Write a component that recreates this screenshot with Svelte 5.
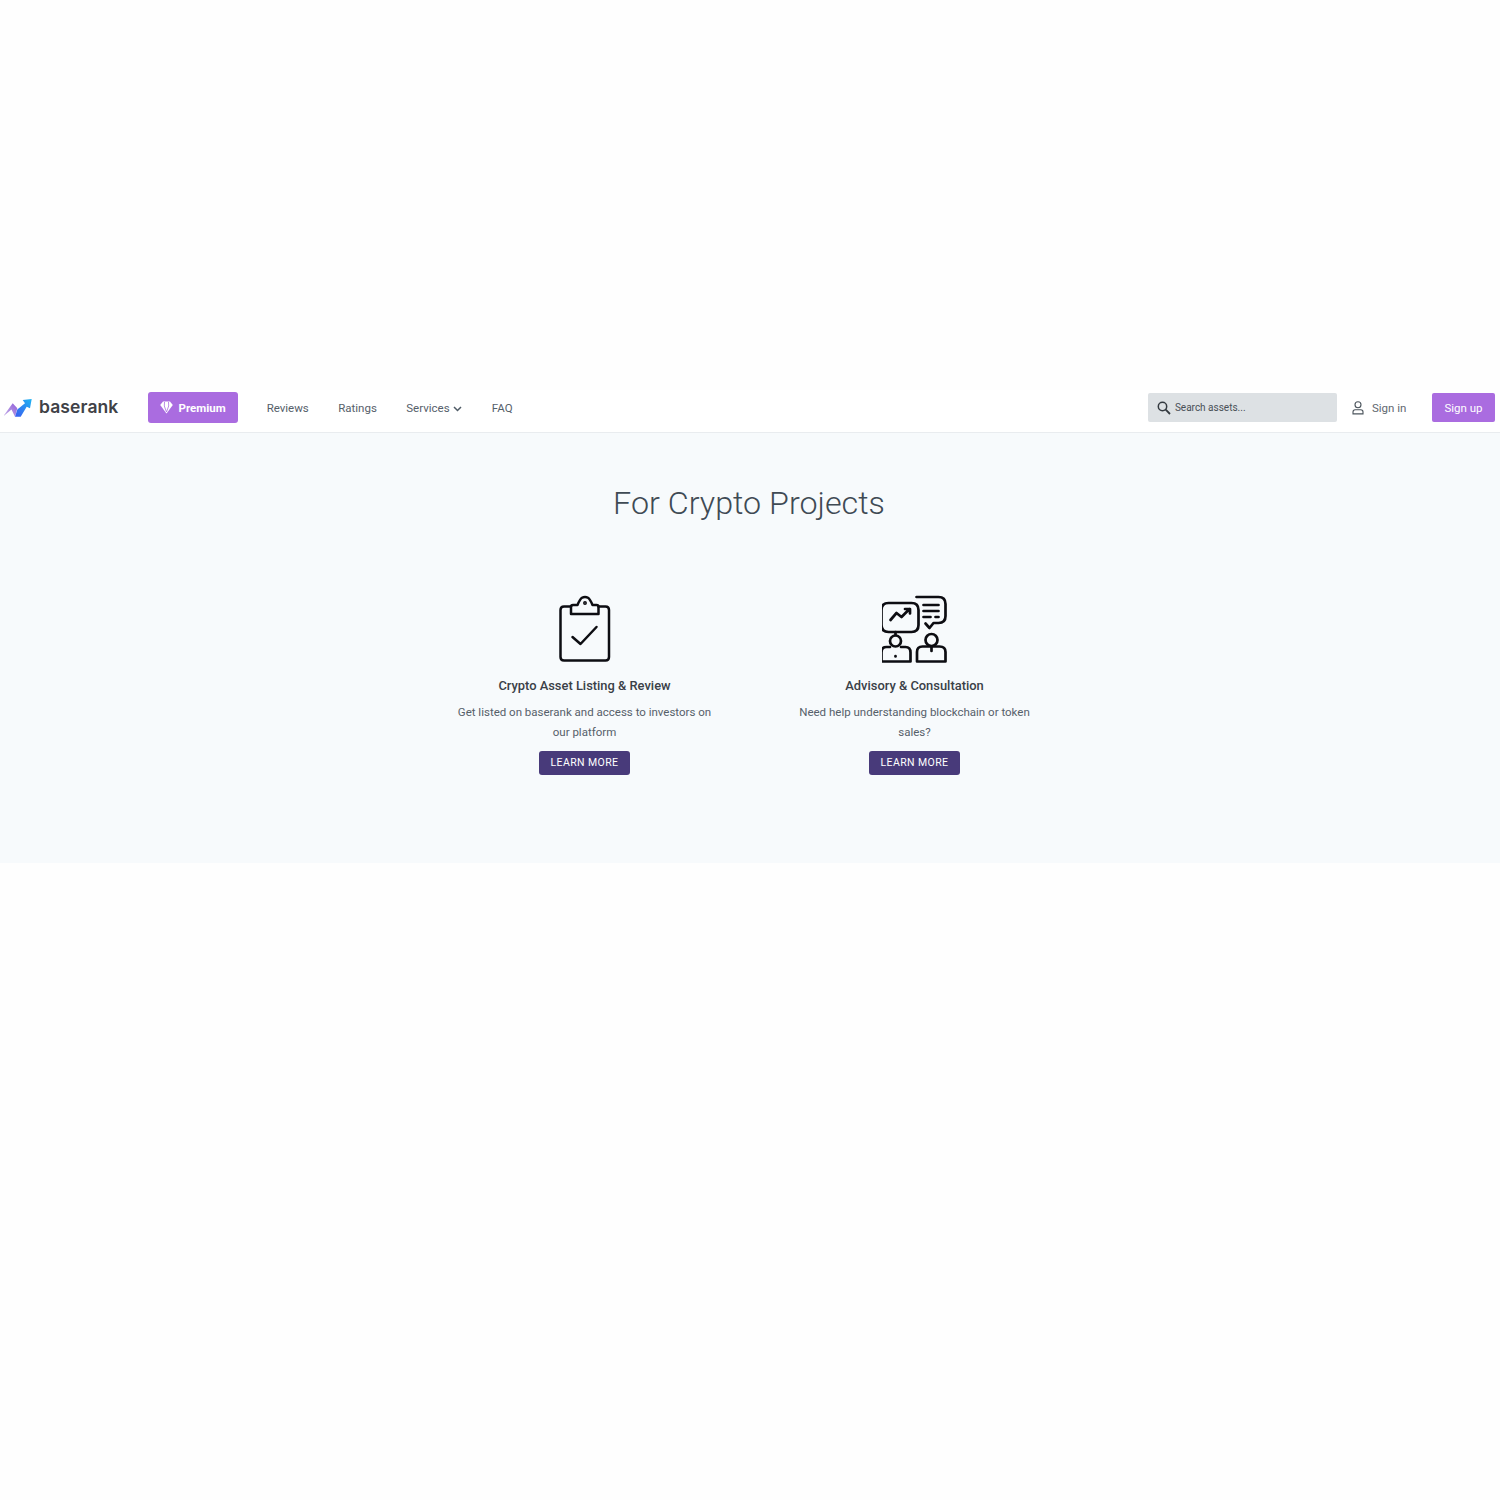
<script>
  const links = ["Reviews", "Ratings"];
  const cards = [
    { title: "Crypto Asset Listing & Review", text: "Get listed on baserank and access to investors on our platform", icon: "clipboard" },
    { title: "Advisory & Consultation", text: "Need help understanding blockchain or token sales?", icon: "advisory" }
  ];
</script>

<div class="page">
  <header>
    <a class="logo" href="#top">
      <svg width="28" height="20" viewBox="0 0 28 20">
        <defs>
          <linearGradient id="blue" x1="0" y1="1" x2="1" y2="0">
            <stop offset="0" stop-color="#3a5cf0" />
            <stop offset="1" stop-color="#1fb4f2" />
          </linearGradient>
          <linearGradient id="purple" x1="0" y1="1" x2="1" y2="0">
            <stop offset="0" stop-color="#c9b4ea" />
            <stop offset="1" stop-color="#8f5fd8" />
          </linearGradient>
        </defs>
        <path d="M-1 18.700 L8.700 5.300 L13.300 10.300 L11 18.700 L7.500 11.500 Z" fill="url(#purple)" />
        <path d="M11 18.700 H16.700 L22.700 8.700 L26 10.300 L27.700 1 L18.700 2 L21 5.300 L13.300 11.500 Z" fill="url(#blue)" />
      </svg>
      <span>baserank</span>
    </a>
    <a class="premium" href="#top">
      <svg width="13" height="13" viewBox="0 0 13 13">
        <path d="M3 0.500 H10 L12.800 4 L6.500 12.500 L0.200 4 Z" fill="#fff" />
        <path d="M4.500 1 L4.300 5 L6.500 11 M8.500 1 L8.700 5 L6.500 11" stroke="#aa6ce0" stroke-width="0.800" fill="none" />
      </svg>
      Premium
    </a>
    <nav>
      {#each links as link}
        <a href="#top">{link}</a>
      {/each}
      <a class="services" href="#top">
        Services
        <svg width="9" height="6" viewBox="0 0 9 6"><path d="M1 1 L4.500 4.500 L8 1" fill="none" stroke="#4f5b66" stroke-width="1.500" /></svg>
      </a>
      <a href="#top">FAQ</a>
    </nav>
    <div class="right">
      <div class="search">
        <svg width="14" height="14" viewBox="0 0 14 14"><circle cx="5.500" cy="5.500" r="4.200" fill="none" stroke="#343a40" stroke-width="1.500" /><path d="M8.700 8.700 L13 13" stroke="#343a40" stroke-width="1.800" /></svg>
        <span>Search assets...</span>
      </div>
      <a class="signin" href="#top">
        <svg width="12" height="14" viewBox="0 0 12 14" fill="none" stroke="#4b545c" stroke-width="1.100">
          <circle cx="6" cy="3.800" r="3" />
          <path d="M1 12.900 V11 Q1 8.800 3.200 8.800 H8.800 Q11 8.800 11 11 V12.900 Z" />
        </svg>
        Sign in
      </a>
      <a class="signup" href="#top">Sign up</a>
    </div>
  </header>

  <main>
    <h1>For Crypto Projects</h1>
    <div class="cards">
      {#each cards as card}
        <section class="card">
          {#if card.icon === "clipboard"}
            <svg class="icon" width="66" height="68" viewBox="0 0 66 68" fill="none" stroke="#0d0d12" stroke-width="2.500" stroke-linejoin="round" stroke-linecap="round">
              <path d="M19 11.500 H12 Q8.500 11.500 8.500 15 V62 Q8.500 65.500 12 65.500 H53.500 Q57 65.500 57 62 V15 Q57 11.500 53.500 11.500 H46.500" />
              <path d="M19 19 V12 Q19 10 21 10 H25.500 Q28 4 30 2.800 Q33 1 36 2.800 Q38 4 40.500 10 H44.500 Q46.500 10 46.500 12 V19 Z" />
              <circle cx="33" cy="8" r="0.700" fill="#0d0d12" />
              <path d="M20.500 42 L28.500 49 L44.500 32" />
            </svg>
          {:else}
            <svg class="icon" width="66" height="68" viewBox="1.500 -1 66 68" fill="none" stroke="#0d0d12" stroke-width="2.700" stroke-linejoin="round" stroke-linecap="round">
              <path d="M8 7 H31 Q38 7 38 14 V29 Q38 36 31 36 H8 Q1 36 1 29 V14 Q1 7 8 7 Z" />
              <path d="M15 36 V39" />
              <path d="M10 24 L16 17 L21 21 L29 13 M24.500 13 H29.500 V17.500" />
              <path d="M36 1 H58 Q65 1 65 8 V20 Q65 27 58 27 H53 L49 32 L45 27.500" />
              <path d="M43 9 H58 M43 15 H58 M43 21 H50 M55 21 H58" />
              <circle cx="15" cy="45" r="5.500" />
              <path d="M9.500 51 H6 Q1 51 1 56.500 V65.500 H30 V56.500 Q30 51 25 51 H20.500" />
              <path d="M15 60 V60.500" />
              <circle cx="51" cy="44" r="6" />
              <path d="M36.500 65.500 V56 Q36.500 50.500 42 50.500 H59 Q65 50.500 65 56 V65.500 Z" />
              <path d="M51 51 V55" />
            </svg>
          {/if}
          <h2>{card.title}</h2>
          <p>{card.text}</p>
          <a class="more" href="#top">LEARN MORE</a>
        </section>
      {/each}
    </div>
  </main>
</div>

<style>
  :global(body) {
    background: #fefefe;
    font-family: Roboto, "Liberation Sans", sans-serif;
  }

  a { text-decoration: none; }

  .page {
    padding-top: 390px;
  }

  header {
    display: flex;
    align-items: center;
    height: 35px;
    padding: 0 5px 7px 4px;
    border-bottom: 1px solid #e9ecef;
    background: #fff;
  }

  .logo {
    display: flex;
    align-items: center;
    gap: 7px;
    width: 143.500px;
    font-family: Inter, sans-serif;
    font-size: 17.500px;
    line-height: 18px;
    font-weight: 600;
    letter-spacing: 0.1px;
    color: #3f4247;
  }

  .logo span { margin-bottom: 2px; }

  .premium {
    display: flex;
    align-items: center;
    gap: 6px;
    height: 31px;
    padding: 0 12px;
    border-radius: 3px;
    background: #aa6ce0;
    color: #fff;
    font-size: 11.500px;
    font-weight: 700;
  }

  nav {
    display: flex;
    align-items: center;
    gap: 29.400px;
    margin-left: 29px;
  }

  nav a {
    color: #56606a;
    font-size: 11.500px;
  }

  .services svg { margin-left: 1px; }

  .right {
    display: flex;
    align-items: center;
    margin-left: auto;
  }

  .search {
    display: flex;
    align-items: center;
    gap: 4px;
    width: 180px;
    height: 29px;
    padding-left: 9px;
    border-radius: 2px;
    background: #dde1e4;
    color: #495057;
    font-size: 10px;
  }

  .signin {
    display: flex;
    align-items: center;
    gap: 8px;
    margin-left: 15px;
    width: 80px;
    color: #5f6870;
    font-size: 11.500px;
  }

  .signup {
    display: flex;
    align-items: center;
    height: 29px;
    padding: 0 12.500px;
    border-radius: 2px;
    background: #aa6ce0;
    color: #fff;
    font-size: 11.500px;
  }

  main {
    height: 429px;
    padding-top: 1px;
    background: #f7fafc;
    text-align: center;
  }

  h1 {
    margin: 50px 0 0;
    padding-right: 2px;
    font-size: 32.250px;
    line-height: 38px;
    font-weight: 300;
    color: #3f4a54;
  }

  .cards {
    display: grid;
    grid-template-columns: 330px 330px;
    justify-content: center;
    margin: 73px 0 0 -1px;
  }

  .card {
    display: flex;
    flex-direction: column;
    align-items: center;
  }

  .icon { display: block; }

  h2 {
    margin: 14px 0 0;
    font-size: 12.900px;
    line-height: 18px;
    font-weight: 500;
    color: #3a4047;
  }

  p {
    width: 260px;
    margin: 7px 0 0;
    font-size: 11.500px;
    line-height: 20px;
    color: #56606a;
  }

  .more {
    margin-top: 9px;
    height: 24px;
    padding: 0 12px;
    border-radius: 3px;
    background: #483a7a;
    color: #fff;
    font-size: 10.500px;
    line-height: 24px;
    letter-spacing: 0.4px;
  }
</style>
